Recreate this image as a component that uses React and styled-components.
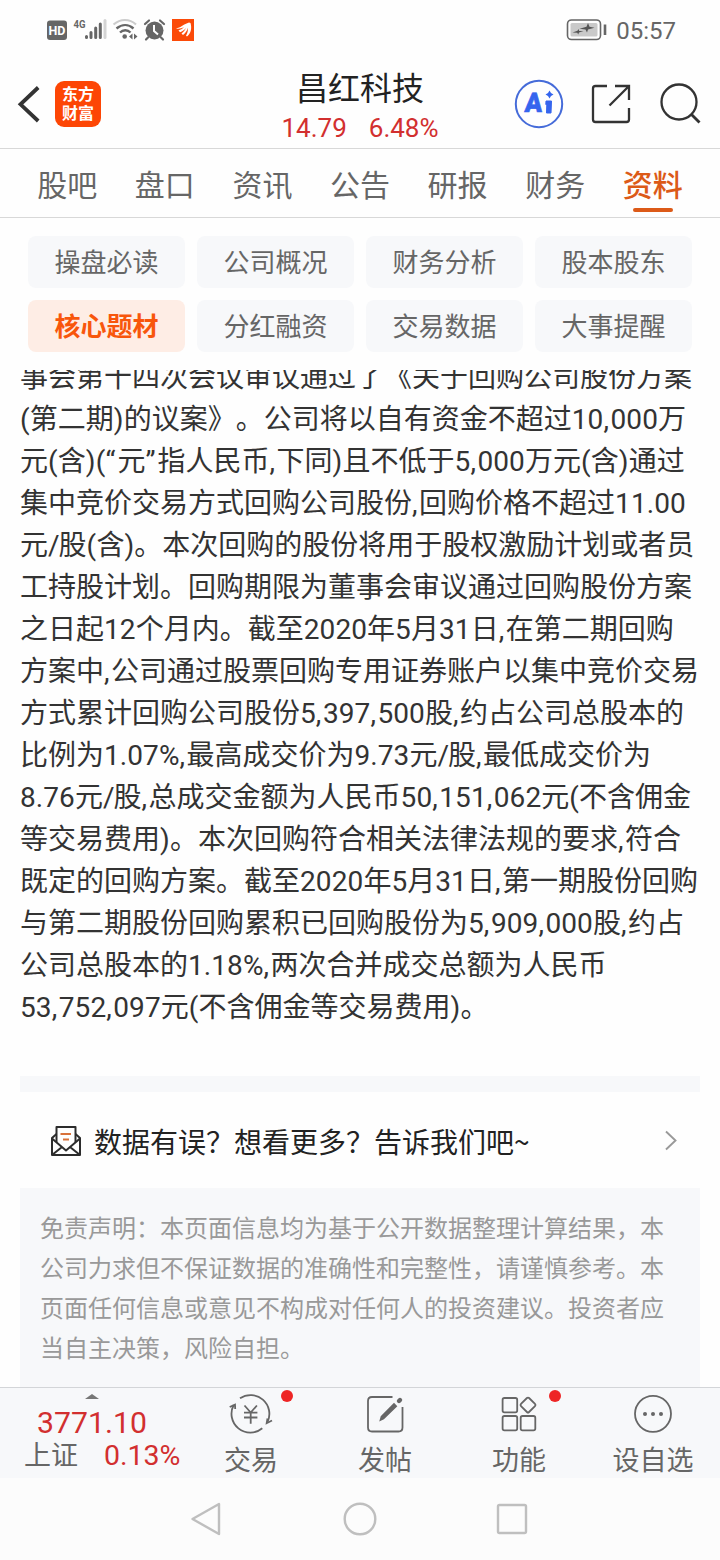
import React from 'react';
import styled, { createGlobalStyle } from 'styled-components';

const GlobalStyle = createGlobalStyle`
  * { box-sizing: border-box; }
  body {
    margin: 0;
    background: #fefefe;
    font-family: Roboto, "Noto Sans CJK SC", sans-serif;
    text-spacing-trim: space-all;
  }
  svg { display: block; flex: none; overflow: visible; }
`;

const Screen = styled.div`
  width: 720px;
  height: 1560px;
  display: flex;
  flex-direction: column;
  overflow: hidden;
  background: #fefefe;
`;

/* Status bar */
const StatusBar = styled.div`
  height: 60px;
  flex: none;
  display: flex;
  align-items: center;
  justify-content: space-between;
  padding: 0 44px 0 47px;
`;
const StatusGroup = styled.div`
  display: flex;
  align-items: center;
`;
const Clock = styled.span`
  font-size: 24px;
  line-height: 30px;
  color: #666;
  margin: 2px 0 0 9px;
`;

/* Header */
const Header = styled.header`
  height: 89px;
  flex: none;
  display: grid;
  grid-template-columns: 205px 1fr 205px;
  border-bottom: 1px solid #d8d8d8;
`;
const HeaderLeft = styled.div`
  display: flex;
  align-items: center;
  padding-left: 18px;
  gap: 15px;
`;
const HeaderRight = styled.div`
  display: flex;
  align-items: center;
`;
const Logo = styled.div`
  width: 46px;
  height: 46px;
  border-radius: 9px;
  background: #fd4605;
  color: #fff;
  font-size: 16px;
  font-weight: 700;
  line-height: 19px;
  text-align: center;
  padding: 4px 0 0;
`;
const TitleBlock = styled.div`
  display: flex;
  flex-direction: column;
  align-items: center;
  padding-top: 9px;
`;
const StockName = styled.div`
  font-size: 32px;
  line-height: 40px;
  color: #222;
`;
const Quote = styled.div`
  display: flex;
  gap: 22px;
  font-size: 26px;
  line-height: 36px;
  color: #d22f2f;
  margin-top: 1px;
`;

/* Tabs */
const Tabs = styled.nav`
  height: 69px;
  flex: none;
  display: flex;
  padding: 0 18.5px;
  border-bottom: 1px solid #d8d8d8;
`;
const Tab = styled.div`
  flex: 1;
  display: flex;
  flex-direction: column;
  align-items: center;
  padding-top: 15px;
  font-size: 30px;
  line-height: 44px;
  font-weight: ${(p) => (p.$active ? 500 : 400)};
  color: ${(p) => (p.$active ? '#dc5a18' : '#666')};
  &::after {
    content: "";
    width: 40px;
    height: 4px;
    border-radius: 2px;
    background: ${(p) => (p.$active ? '#dc5a18' : 'transparent')};
  }
`;

const Pills = styled.div`
  flex: none;
  display: grid;
  grid-template-columns: repeat(4, 157px);
  grid-auto-rows: 52px;
  gap: 12px;
  padding: 18px 28px;
`;
const Pill = styled.div`
  border-radius: 8px;
  font-size: 26px;
  line-height: 54px;
  text-align: center;
  background: ${(p) => (p.$active ? '#feede5' : '#f7f8fa')};
  color: ${(p) => (p.$active ? '#f8560c' : '#666')};
  font-weight: ${(p) => (p.$active ? 700 : 400)};
`;

/* Scrolling content, scrolled part way through the article */
const Content = styled.main`
  flex: 1;
  min-height: 0;
  overflow: hidden;
  padding: 0 20px;
`;
const Article = styled.div`
  margin-top: -13px;
  padding-bottom: 47px;
  font-size: 28px;
  line-height: 42px;
  color: #333;
`;
const Line = styled.div`
  white-space: nowrap;
`;
const Spaced = styled.span`
  letter-spacing: ${(p) => p.$gap}px;
`;
const Band = styled.div`
  height: 16px;
  background: #f7f8fa;
`;
const Feedback = styled.div`
  height: 96px;
  display: flex;
  align-items: center;
  padding: 1px 22px 0 30px;
  font-family: "Noto Sans CJK SC", sans-serif;
  font-size: 28px;
  line-height: 40px;
  color: #222;
`;
const FeedbackText = styled.span`
  flex: 1;
  margin-left: 12px;
`;
const Disclaimer = styled.div`
  height: 220px;
  padding: 21px 20px;
  background: #f7f8fa;
  font-size: 24px;
  line-height: 40px;
  color: #999;
`;

/* Bottom bar */
const BottomBar = styled.footer`
  height: 91px;
  flex: none;
  display: flex;
  background: #f7f8fa;
  border-top: 1px solid #d3d5d8;
`;
const IndexBlock = styled.div`
  width: 184px;
  display: flex;
  flex-direction: column;
  align-items: center;
  padding-top: 6px;
`;
const IndexValue = styled.div`
  font-size: 30.2px;
  line-height: 34px;
  margin-top: 7px;
  color: #d22f2f;
`;
const IndexRow = styled.div`
  width: 184px;
  padding-left: 24px;
  display: flex;
  gap: 26px;
  font-size: 27px;
  line-height: 32px;
  color: #666;
`;
const Change = styled.span`
  font-size: 28.5px;
  color: #d22f2f;
`;
const Action = styled.div`
  position: relative;
  width: 134px;
  display: flex;
  flex-direction: column;
  align-items: center;
  padding-top: 6px;
  font-size: 27px;
  line-height: 40px;
  color: #666;
`;
const ActionLabel = styled.span`
  margin-top: 7px;
`;
const Badge = styled.i`
  position: absolute;
  top: 2px;
  left: 97px;
  width: 12px;
  height: 12px;
  border-radius: 50%;
  background: #ee2525;
`;
const SystemNav = styled.div`
  height: 82px;
  flex: none;
  display: flex;
  align-items: center;
  justify-content: center;
  gap: 118px;
  background: #fcfcfc;
`;

const StatusIcons = () => (
  <svg width="148" height="30" viewBox="47 15 148 30" fill="none">
    <rect x="47" y="20.5" width="20" height="19.5" rx="3" fill="#666" />
    <text x="57" y="35" fontSize="12.5" fontWeight="700" textAnchor="middle" fill="#fff">HD</text>
    <text x="73.5" y="28" fontSize="11.5" fontWeight="700" textLength="12" lengthAdjust="spacingAndGlyphs" fill="#666">4G</text>
    <g strokeWidth="3" strokeLinecap="round">
      <path d="M86.5 36.5v1M91 32.5v5M95.7 28v9.5M100.3 24v13.5" stroke="#666" />
      <path d="M105 20.5v17" stroke="#d4d4d4" />
    </g>
    <path d="M113.5 24.5c7-6 16-6 22.5 0" stroke="#ccc" strokeWidth="2.2" />
    <path d="M116.5 28.5c5.5-4.5 12-4.5 17 0M120 32.5c3-3 7.5-3 10.5 0" stroke="#666" strokeWidth="2.4" />
    <circle cx="124.7" cy="36.5" r="2.3" fill="#666" />
    <path d="M132.5 33.5v6l-3.5-3zM134 33.5v6l3.5-3z" fill="#666" />
    <circle cx="154.5" cy="30.5" r="9" fill="#666" />
    <path d="M145 24l4-3.500M164 24l-4-3.500M148 37.500l-2 2M161 37.500l2 2" stroke="#666" strokeWidth="2.2" strokeLinecap="round" />
    <path d="M154 25v6l4 3.500" stroke="#fff" strokeWidth="2" />
    <rect x="172" y="19" width="22" height="22" fill="#fb4a08" />
    <path d="M176 28.500c4.500-.8 8-4.500 13-6l1.500.5c1.500 5 .5 10.500-3.500 13.500l-1-.8c1.500-2.500 2-5 2-8-1 3-2.500 5.500-5 7.200l-1.500-1.400c2-1.500 3.500-3.300 4.500-5.500-1.800 2-3.500 3.400-6 4.300l-1.500-1.800c2-.7 3.800-1.700 5.500-3.200-2.500 1.200-5 1.700-8 1.200z" fill="#fff" />
  </svg>
);

const BatteryIcon = () => (
  <svg width="41" height="22" viewBox="0 0 41 22" fill="none">
    <rect x="1.5" y="1" width="33" height="19.5" rx="4" stroke="#666" strokeWidth="1.6" />
    <rect x="4.5" y="4" width="27" height="13.5" rx="1.5" fill="#c9c9c9" />
    <path d="M6.500 13.500l5-1.700 1-1.800.7 2h4.300l-4.500 1.500-.8 2-.9-1.800zM13.500 9.800l7-2L22 4l1.500 3.700 5 1-6.500 1.800-1 3-1.500-3z" fill="#555" />
    <path d="M39 5.500v10.500" stroke="#666" strokeWidth="2.6" />
  </svg>
);

const BackIcon = () => (
  <svg width="22" height="38" viewBox="0 0 22 38" fill="none">
    <path d="M20.200 2.500L2.500 19.300l17.700 16.700" stroke="#333" strokeWidth="3.8" />
  </svg>
);

const HeaderIcons = () => (
  <svg width="190" height="50" viewBox="515 79 190 50" fill="none">
    <circle cx="539" cy="104" r="23.2" stroke="#456bd9" strokeWidth="2" />
    <path d="M549.500 90.500l1.500 2.500 2.500 1.500-2.500 1.500-1.500 2.500-1.500-2.500-2.500-1.500 2.500-1.500z" fill="#3565ee" />
    <text x="532" y="112.5" fontSize="27" fontWeight="900" textLength="17.5" lengthAdjust="spacingAndGlyphs" fill="#3565ee" stroke="#3565ee" strokeWidth=".6" transform="skewX(-4)">A</text>
    <path d="M546 101h5.500l-.5 12h-4.500l.3-8.500h-1z" fill="#3565ee" stroke="#3565ee" strokeWidth="1" strokeLinejoin="round" />
    <g stroke="#333" strokeWidth="2.3">
      <path d="M607 86h-11.500q-2.500 0-2.500 2.500v31q0 2.500 2.500 2.500h31q2.500 0 2.500-2.500V108" />
      <path d="M615 86h14v14M629 86l-19.500 19.500" />
      <circle cx="679" cy="102" r="17.5" />
      <path d="M691.500 114.500l8 8" strokeWidth="2.8" />
    </g>
  </svg>
);

const MailIcon = () => (
  <svg width="32" height="32" viewBox="0 0 32 32" fill="none" stroke="#2c2c2c" strokeWidth="2" strokeLinejoin="round">
    <path d="M6.500 17V2h19v15" />
    <path d="M6.500 9L2 13v17h28V13l-4.500-4" />
    <path d="M2 13.500l14 12 14-12M2 30l10-8M30 30l-10-8" />
    <path d="M10.500 9h10.500M13 14.500h6" stroke="#d8713a" />
  </svg>
);

const Chevron = () => (
  <svg width="14" height="22" viewBox="0 0 14 22" fill="none">
    <path d="M2 1.500l9.500 9L2 19.500" stroke="#999" strokeWidth="1.9" />
  </svg>
);

const actionIcons = {
  trade: (
    <>
      <path d="M2.700 11A18.800 18.800 0 0 0 31.300 34.300M9 4.300A18.800 18.800 0 0 1 36.500 28" />
      <path d="M-1.300 13L4 10.600l.2 4.400M41 26.500l-5.300 2.700.8-4.700" />
      <path d="M13.500 11.500l6.200 7 6.200-7M19.700 18.500v11.200M13 18.700h13.400M13 23.500h13.400" />
    </>
  ),
  post: (
    <>
      <path d="M27.500 3H7Q3 3 3 7v26.500q0 4 4 4h26.500q4 0 4-4V13" />
      <path d="M16.500 22.500L29 10l2.200 2.200L18.500 24.500l-3 1.500z" fill="#666" strokeWidth="1.6" />
      <path d="M34 7l1-1" strokeWidth="4.4" strokeLinecap="round" />
    </>
  ),
  features: (
    <>
      <rect x="3.600" y="4" width="14.6" height="14.4" rx="1.8" />
      <rect x="3.600" y="22" width="14.6" height="14.4" rx="1.8" />
      <rect x="21.700" y="22" width="14.6" height="14.4" rx="1.8" />
      <rect x="23.300" y="5.300" width="11.4" height="11.4" rx="1.5" transform="rotate(45 29 11)" />
    </>
  ),
  more: (
    <>
      <circle cx="20" cy="19.8" r="18" />
      <g fill="#666" stroke="none">
        <circle cx="12" cy="20" r="2" />
        <circle cx="20" cy="20" r="2" />
        <circle cx="28" cy="20" r="2" />
      </g>
    </>
  ),
};

const tabs = ['股吧', '盘口', '资讯', '公告', '研报', '财务', '资料'];
const pills = ['操盘必读', '公司概况', '财务分析', '股本股东', '核心题材', '分红融资', '交易数据', '大事提醒'];
const lines = [
  '事会第十四次会议审议通过了《关于回购公司股份方案',
  '(第二期)的议案》。公司将以自有资金不超过10,000万',
  '元(含)(“元”指人民币,下同)且不低于5,000万元(含)通过',
  '集中竞价交易方式回购公司股份,回购价格不超过11.00',
  '元/股(含)。本次回购的股份将用于股权激励计划或者员',
  '工持股计划。回购期限为董事会审议通过回购股份方案',
  '之日起12个月内。截至2020年5月31日,在第二期回购',
  '方案中,公司通过股票回购专用证券账户以集中竞价交易',
  '方式累计回购公司股份5,397,500股,约占公司总股本的',
  '比例为1.07%,最高成交价为9.73元/股,最低成交价为',
  '8.76元/股,总成交金额为人民币50,151,062元(不含佣金',
  '等交易费用)。本次回购符合相关法律法规的要求,符合',
  '既定的回购方案。截至2020年5月31日,第一期股份回购',
  '与第二期股份回购累积已回购股份为5,909,000股,约占',
  '公司总股本的1.18%,两次合并成交总额为人民币',
  '53,752,097元(不含佣金等交易费用)。',
];
const disclaimer = [
  '免责声明：本页面信息均为基于公开数据整理计算结果，本',
  '公司力求但不保证数据的准确性和完整性，请谨慎参考。本',
  '页面任何信息或意见不构成对任何人的投资建议。投资者应',
  '当自主决策，风险自担。',
];
const actions = [
  { icon: 'trade', label: '交易', badge: true },
  { icon: 'post', label: '发帖' },
  { icon: 'features', label: '功能', badge: true },
  { icon: 'more', label: '设自选' },
];

const typeset = (text) =>
  text.split(/([“”]|[()]|,|\/|\d+)/).map((part, i) => {
    if (/^[“”]$/.test(part)) return <Spaced key={i} $gap={2}>{part}</Spaced>;
    if (/^[()]$/.test(part)) return <Spaced key={i} $gap={0.2}>{part}</Spaced>;
    if (part === ',') return <Spaced key={i} $gap={1.5}>{part}</Spaced>;
    if (part === '/') return <Spaced key={i} $gap={-1}>{part}</Spaced>;
    if (/^\d+$/.test(part)) return <Spaced key={i} $gap={0.1}>{part}</Spaced>;
    return part;
  });

export default function App() {
  return (
    <Screen>
      <GlobalStyle />
      <StatusBar>
        <StatusGroup><StatusIcons /></StatusGroup>
        <StatusGroup>
          <BatteryIcon />
          <Clock>05:57</Clock>
        </StatusGroup>
      </StatusBar>
      <Header>
        <HeaderLeft>
          <BackIcon />
          <Logo>东方<br />财富</Logo>
        </HeaderLeft>
        <TitleBlock>
          <StockName>昌红科技</StockName>
          <Quote><span>14.79</span><span>6.48%</span></Quote>
        </TitleBlock>
        <HeaderRight><HeaderIcons /></HeaderRight>
      </Header>
      <Tabs>
        {tabs.map((t, i) => <Tab key={t} $active={i === 6}>{t}</Tab>)}
      </Tabs>
      <Pills>
        {pills.map((t, i) => <Pill key={t} $active={i === 4}>{t}</Pill>)}
      </Pills>
      <Content>
        <Article>
          {lines.map((l) => <Line key={l}>{typeset(l)}</Line>)}
        </Article>
        <Band />
        <Feedback>
          <MailIcon />
          <FeedbackText>数据有误？想看更多？告诉我们吧~</FeedbackText>
          <Chevron />
        </Feedback>
        <Disclaimer>
          {disclaimer.map((l) => <Line key={l}>{l}</Line>)}
        </Disclaimer>
      </Content>
      <BottomBar>
        <IndexBlock>
          <svg width="14" height="5" viewBox="0 0 14 5"><path d="M0 5L7 0l7 5z" fill="#777" /></svg>
          <IndexValue>3771.10</IndexValue>
          <IndexRow>上证<Change>0.13%</Change></IndexRow>
        </IndexBlock>
        {actions.map((a) => (
          <Action key={a.label}>
            <svg width="40" height="40" viewBox="0 0 40 40" fill="none" stroke="#666" strokeWidth="1.8">
              {actionIcons[a.icon]}
            </svg>
            <ActionLabel>{a.label}</ActionLabel>
            {a.badge && <Badge />}
          </Action>
        ))}
      </BottomBar>
      <SystemNav>
        <svg width="34" height="34" viewBox="0 0 34 34" fill="none" stroke="#bfbfbf" strokeWidth="2.4" strokeLinejoin="round">
          <path d="M28 2v30L1.500 17z" />
        </svg>
        <svg width="34" height="34" viewBox="0 0 34 34" fill="none" stroke="#bfbfbf" strokeWidth="2.4">
          <circle cx="17" cy="17" r="15.3" />
        </svg>
        <svg width="34" height="34" viewBox="0 0 34 34" fill="none" stroke="#bfbfbf" strokeWidth="2.4">
          <rect x="3" y="3" width="28" height="28" rx="1.5" />
        </svg>
      </SystemNav>
    </Screen>
  );
}
